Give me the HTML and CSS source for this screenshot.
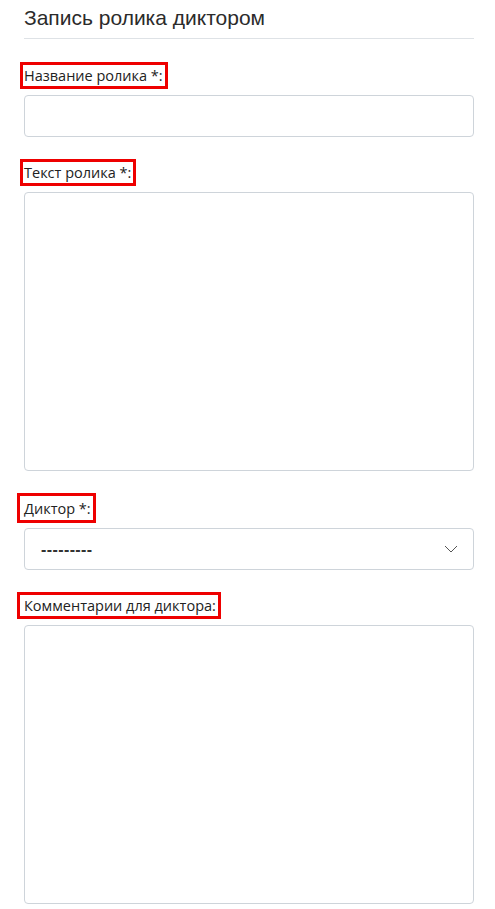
FILE: index.html
```html
<!DOCTYPE html>
<html lang="ru">
<head>
    <meta charset="UTF-8">
    <meta name="viewport" content="width=device-width, initial-scale=1.0">
    <title>Запись ролика диктором</title>
    <link rel="stylesheet" href="styles.css">
</head>
<body>
    <div class="page">
        <h2 class="page-title">Запись ролика диктором</h2>

        <form class="order-form">
            <div class="field">
                <label class="field-label" for="title">Название ролика *:</label>
                <input class="field-input" type="text" id="title" name="title">
            </div>

            <div class="field">
                <label class="field-label" for="text">Текст ролика *:</label>
                <textarea class="field-input field-area" id="text" name="text"></textarea>
            </div>

            <div class="field">
                <label class="field-label field-label--wide field-label--tall" for="speaker">Диктор *:</label>
                <div class="select-wrap">
                    <select class="field-input field-select" id="speaker" name="speaker">
                        <option>---------</option>
                    </select>
                    <svg class="select-arrow" width="14" height="8" viewBox="0 0 14 8">
                        <path d="M1 1l6 6 6-6" fill="none" stroke="#555" stroke-width="1"/>
                    </svg>
                </div>
            </div>

            <div class="field">
                <label class="field-label field-label--wide" for="comment">Комментарии для диктора:</label>
                <textarea class="field-input field-area" id="comment" name="comment"></textarea>
            </div>
        </form>
    </div>
</body>
</html>
```

FILE: styles.css
```css
body {
    margin: 0;
    padding: 0;
    background-color: #fff;
    color: #212529;
    font-family: "Liberation Sans", Arial, sans-serif;
}

.page {
    padding: 0 21px 0 24px;
}

.page-title {
    margin: 0;
    padding: 5px 0 8px;
    font-size: 21px;
    line-height: 25px;
    font-weight: normal;
    color: #2b2b2b;
    border-bottom: 1px solid #dee2e6;
}

.order-form {
    padding-top: 23px;
}

.field {
    margin-bottom: 22px;
}

.field-label {
    display: inline-block;
    margin: 0 0 6px -4px;
    padding: 1px 2px 1px 1px;
    border: 3px solid #ee0000;
    font-family: "Open Sans", "Liberation Sans", sans-serif;
    font-size: 14.5px;
    line-height: 19px;
    color: #222;
}

.field-label--wide {
    margin-left: -7px;
    padding-left: 4px;
    padding-right: 2px;
}

.field-label--tall {
    padding-top: 3px;
    padding-bottom: 2px;
    margin-bottom: 5px;
}

.field-input {
    display: block;
    box-sizing: border-box;
    width: 100%;
    height: 42px;
    margin: 0;
    padding: 6px 12px;
    border: 1px solid #ced4da;
    border-radius: 4px;
    background-color: #fff;
    font-family: inherit;
    font-size: 14px;
    color: #212529;
}

.field-area {
    height: 279px;
    resize: none;
}

.select-wrap {
    position: relative;
}

.field-select {
    -webkit-appearance: none;
    appearance: none;
    padding-left: 16px;
    font-size: 16px;
    font-weight: bold;
    letter-spacing: 0.4px;
    color: #333;
}

.select-arrow {
    position: absolute;
    right: 16px;
    top: 17px;
    pointer-events: none;
}
```
